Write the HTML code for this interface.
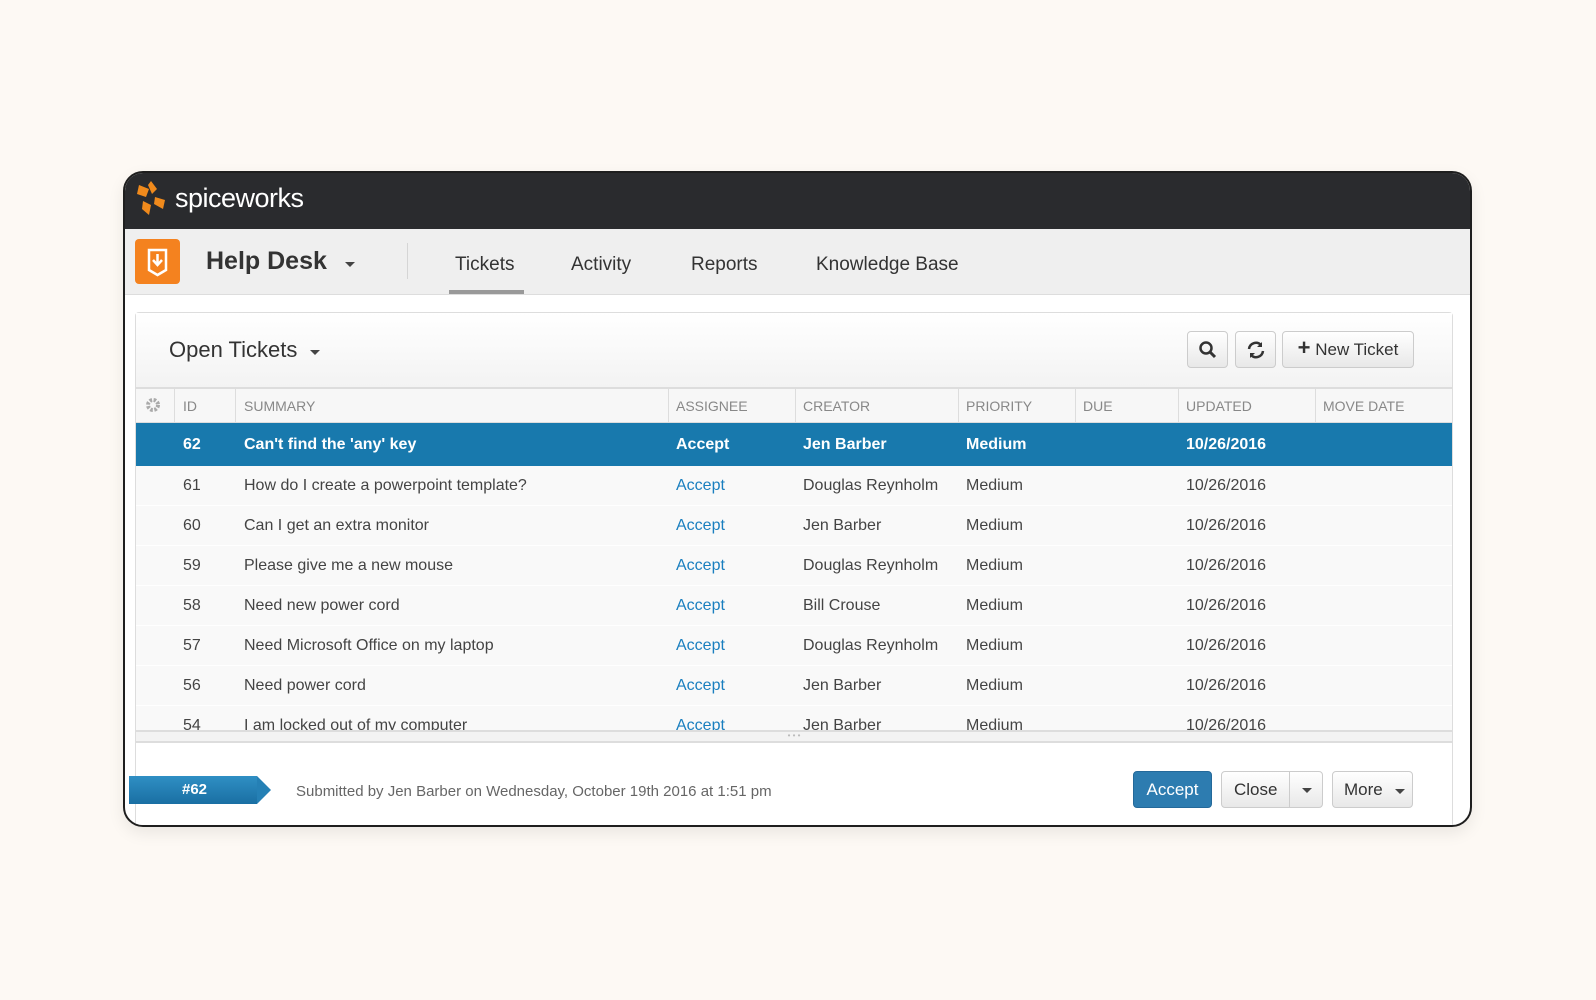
<!DOCTYPE html>
<html><head><meta charset="utf-8"><style>
*{box-sizing:border-box;margin:0;padding:0}
body{width:1596px;height:1000px;background:#fdf9f4;font-family:"Liberation Sans",sans-serif;position:relative;overflow:hidden;color:#333}
.frame{position:absolute;left:123px;top:171px;width:1349px;height:656px;border:2px solid #1e1e1e;border-radius:20px;background:#fff;overflow:hidden;box-shadow:0 6px 16px rgba(0,0,0,.08)}
.top{position:absolute;left:0;top:0;right:0;height:56px;background:#2a2b2e}
.logo{position:absolute;left:50px;top:10px;color:#fff;font-size:27px;letter-spacing:-0.5px}
.nav{position:absolute;left:0;top:56px;right:0;height:66px;background:#efefef;border-bottom:1px solid #ddd}
.oi{position:absolute;left:10px;top:10px;width:45px;height:45px;background:#f4821f;border-radius:4px}
.hd{position:absolute;left:81px;top:18px;font-size:25px;font-weight:bold;color:#333}
.car{position:absolute;width:0;height:0;border-left:5px solid transparent;border-right:5px solid transparent;border-top:5px solid #444}
.sep{position:absolute;left:282px;top:14px;width:1px;height:36px;background:#d5d5d5}
.tab{position:absolute;top:25px;font-size:19px;color:#333}
.ul{position:absolute;left:324px;top:61px;width:75px;height:4px;background:#999}
.panel{position:absolute;left:10px;top:139px;width:1318px;height:520px;border:1px solid #ddd;border-radius:4px;background:#fff}
.ph{position:absolute;left:0;top:0;right:0;height:76px;background:linear-gradient(#fff,#f3f3f3);border-bottom:2px solid #ddd}
.btn{position:absolute;border:1px solid #ccc;border-radius:4px;background:linear-gradient(#fff,#e8e8e8);font-size:17px;color:#333;text-align:center}
.th{position:absolute;left:0;right:0;top:76px;height:34px;background:#f7f7f7;border-bottom:1px solid #ddd;font-size:14px;color:#888}
.th span{position:absolute;top:9px}
.th i{position:absolute;top:0;width:1px;height:34px;background:#ddd}
.row{position:absolute;left:0;right:0;height:39px;font-size:16px;color:#444;background:#f9f9f9}
.row span{position:absolute;top:11px;white-space:nowrap}
.row .a{color:#1a7fbf}
.row.sel{background:#1879ad;color:#fff;font-weight:bold;height:43px}
.row.sel span{top:13px}
.row.sel .a{color:#fff}
</style></head><body>
<div class="frame">
 <div class="top">
  <svg style="position:absolute;left:8px;top:6px" width="36" height="40" viewBox="0 0 36 40"><g fill="#f08a1c"><path d="M6 6l10 4-3 8-9-3z"/><path d="M18 2l6 8-5 5-4-9z"/><path d="M22 18l10 3-2 9-9-5z"/><path d="M10 22l8 4-2 10-7-6z"/></g></svg>
  <div class="logo">spiceworks</div>
 </div>
 <div class="nav">
  <div class="oi"><svg width="45" height="45" viewBox="0 0 45 45"><path d="M14 11h17v20l-8.5 5-8.5-5z" fill="none" stroke="#fff" stroke-width="2.5"/><path d="M22.5 15v11M18 21l4.5 5 4.5-5" stroke="#fff" stroke-width="2.5" fill="none"/></svg></div>
  <div class="hd">Help Desk</div><div class="car" style="left:220px;top:33px"></div>
  <div class="sep"></div>
  <div class="tab" style="left:330px">Tickets</div>
  <div class="tab" style="left:446px">Activity</div>
  <div class="tab" style="left:566px">Reports</div>
  <div class="tab" style="left:691px">Knowledge Base</div>
  <div class="ul"></div>
 </div>
 <div class="panel">
  <div class="ph">
   <div style="position:absolute;left:33px;top:24px;font-size:22px;color:#333">Open Tickets</div>
   <div class="car" style="left:174px;top:37px"></div>
   <div class="btn" style="left:1051px;top:18px;width:41px;height:37px"><svg width="20" height="20" viewBox="0 0 20 20" style="margin-top:8px"><circle cx="8" cy="8" r="5.5" fill="none" stroke="#333" stroke-width="2.5"/><path d="M12 12l5 5" stroke="#333" stroke-width="3"/></svg></div>
   <div class="btn" style="left:1099px;top:18px;width:41px;height:37px"><svg width="20" height="20" viewBox="0 0 20 20" style="margin-top:8px"><path d="M3 9a7 7 0 0 1 12-4M17 11a7 7 0 0 1-12 4" fill="none" stroke="#333" stroke-width="2.5"/><path d="M16 2v5h-5zM4 18v-5h5z" fill="#333"/></svg></div>
   <div class="btn" style="left:1146px;top:18px;width:132px;height:37px;padding-top:8px"><b style="font-size:22px;line-height:16px">+</b> New Ticket</div>
  </div>
  <div class="th">
   <svg style="position:absolute;left:9px;top:8px" width="16" height="16" viewBox="0 0 16 16"><circle cx="8" cy="8" r="5" fill="none" stroke="#aaa" stroke-width="4" stroke-dasharray="2.5 1.5"/><circle cx="8" cy="8" r="2" fill="#f7f7f7"/></svg>
   <i style="left:38px"></i><span style="left:47px">ID</span>
   <i style="left:99px"></i><span style="left:108px">SUMMARY</span>
   <i style="left:532px"></i><span style="left:540px">ASSIGNEE</span>
   <i style="left:659px"></i><span style="left:667px">CREATOR</span>
   <i style="left:822px"></i><span style="left:830px">PRIORITY</span>
   <i style="left:939px"></i><span style="left:947px">DUE</span>
   <i style="left:1042px"></i><span style="left:1050px">UPDATED</span>
   <i style="left:1179px"></i><span style="left:1187px">MOVE DATE</span>
  </div>
  <div class="row sel" style="top:110px"><span style="left:47px">62</span><span style="left:108px">Can't find the 'any' key</span><span class="a" style="left:540px">Accept</span><span style="left:667px">Jen Barber</span><span style="left:830px">Medium</span><span style="left:1050px">10/26/2016</span></div>
  <div class="row" style="top:153px"><span style="left:47px">61</span><span style="left:108px">How do I create a powerpoint template?</span><span class="a" style="left:540px">Accept</span><span style="left:667px">Douglas Reynholm</span><span style="left:830px">Medium</span><span style="left:1050px">10/26/2016</span></div>
  <div class="row" style="top:193px"><span style="left:47px">60</span><span style="left:108px">Can I get an extra monitor</span><span class="a" style="left:540px">Accept</span><span style="left:667px">Jen Barber</span><span style="left:830px">Medium</span><span style="left:1050px">10/26/2016</span></div>
  <div class="row" style="top:233px"><span style="left:47px">59</span><span style="left:108px">Please give me a new mouse</span><span class="a" style="left:540px">Accept</span><span style="left:667px">Douglas Reynholm</span><span style="left:830px">Medium</span><span style="left:1050px">10/26/2016</span></div>
  <div class="row" style="top:273px"><span style="left:47px">58</span><span style="left:108px">Need new power cord</span><span class="a" style="left:540px">Accept</span><span style="left:667px">Bill Crouse</span><span style="left:830px">Medium</span><span style="left:1050px">10/26/2016</span></div>
  <div class="row" style="top:313px"><span style="left:47px">57</span><span style="left:108px">Need Microsoft Office on my laptop</span><span class="a" style="left:540px">Accept</span><span style="left:667px">Douglas Reynholm</span><span style="left:830px">Medium</span><span style="left:1050px">10/26/2016</span></div>
  <div class="row" style="top:353px"><span style="left:47px">56</span><span style="left:108px">Need power cord</span><span class="a" style="left:540px">Accept</span><span style="left:667px">Jen Barber</span><span style="left:830px">Medium</span><span style="left:1050px">10/26/2016</span></div>
  <div class="row" style="top:393px;height:24px;overflow:hidden"><span style="left:47px">54</span><span style="left:108px">I am locked out of my computer</span><span class="a" style="left:540px">Accept</span><span style="left:667px">Jen Barber</span><span style="left:830px">Medium</span><span style="left:1050px">10/26/2016</span></div>
  <div style="position:absolute;left:0;right:0;top:417px;height:13px;background:#f3f3f3;border-top:2px solid #ddd;border-bottom:2px solid #ddd;text-align:center;font-size:8px;color:#bbb;line-height:8px">• • •</div>
  <div style="position:absolute;left:160px;top:470px;font-size:15px;color:#666">Submitted by Jen Barber on Wednesday, October 19th 2016 at 1:51 pm</div>
  <div class="btn" style="left:997px;top:458px;width:79px;height:37px;background:#2d7cb0;border-color:#24699a;color:#fff;padding-top:8px">Accept</div>
  <div class="btn" style="left:1085px;top:458px;width:102px;height:37px;padding-top:8px;text-align:left;padding-left:12px">Close<span style="position:absolute;left:67px;top:0;width:1px;height:35px;background:#ccc"></span><span class="car" style="left:80px;top:16px"></span></div>
  <div class="btn" style="left:1196px;top:458px;width:81px;height:37px;padding-top:8px;text-align:left;padding-left:11px">More<span class="car" style="left:62px;top:17px"></span></div>
 </div>
</div>
<div style="position:absolute;left:129px;top:776px;width:128px;height:28px;background:linear-gradient(#2f8fc4,#1a6fa3);color:#fff;font-weight:bold;font-size:15px;line-height:28px;padding-left:53px">#62</div>
<div style="position:absolute;left:257px;top:776px;width:0;height:0;border-top:14px solid transparent;border-bottom:14px solid transparent;border-left:14px solid #2580b5"></div>
</body></html>
